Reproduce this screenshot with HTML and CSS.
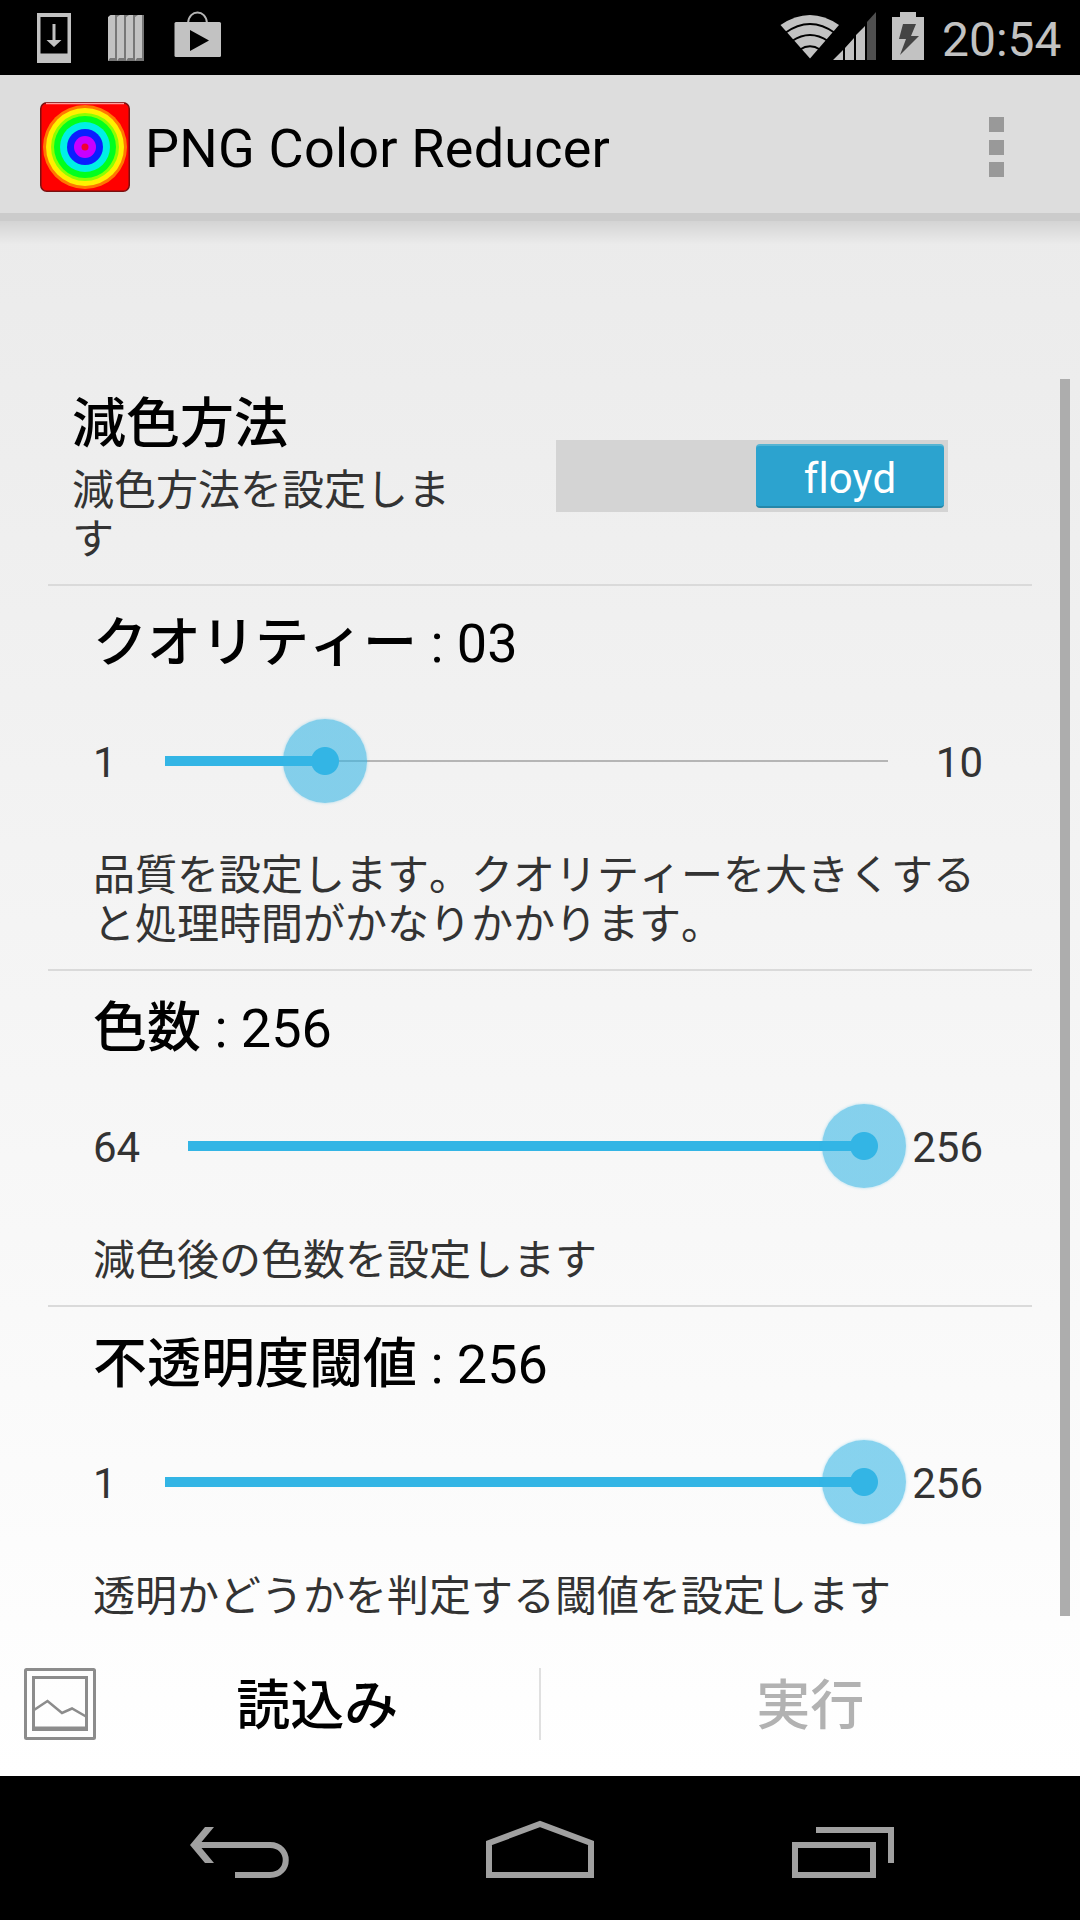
FILE: index.html
```
<!DOCTYPE html>
<html lang="ja">
<head>
  <meta charset="UTF-8" />
  <meta name="viewport" content="width=device-width, initial-scale=1.0"/>
  <title>PNG Color Reducer</title>
  <link rel="stylesheet" href="styles.css">
</head>
<body>
  <div class="status-bar">
    <svg class="status-left" width="240" height="75" viewBox="0 0 240 75">
      <!-- download -->
      <path fill="#c2c2c2" fill-rule="evenodd" d="M37 13h34v50H37zM40.500 17v36.500h27V17z"/>
      <path fill="#c2c2c2" d="M52.500 24h3v16h6L54 47l-7.500-7h6z"/>
      <!-- books -->
      <path fill="#777" d="M110 15h34v46h-36V18z"/>
      <path fill="#c2c2c2" d="M108 17l3-2h4v43h-5l-2 3zM117 17l3-2h4v43h-5l-2 3zM126 17l3-2h4v43h-5l-2 3zM135 17l3-2h4v43h-5l-2 3z"/>
      <!-- store bag -->
      <path fill="none" stroke="#b5b5b5" stroke-width="2" d="M188 23c1-14 18-14 19 0"/>
      <rect x="174.500" y="22" width="46.500" height="35" rx="1.500" fill="#c2c2c2"/>
      <path d="M190 30l19 10.500L190 51z"/>
    </svg>
    <svg class="status-right" width="150" height="75" viewBox="780 0 150 75">
      <!-- wifi -->
      <path fill="#c2c2c2" d="M780.500 25Q810 5 839 25L810 58.500z"/>
      <g fill="none" stroke="#000" stroke-width="2">
        <path d="M785 33Q810 15 835 33"/>
        <path d="M792 41Q810 29 828 41"/>
        <path d="M800 49.500Q810 43 820 49.500"/>
      </g>
      <!-- signal -->
      <path fill="#c2c2c2" d="M833 60l10-10v10zM845 48l9-10v22h-9zM856 35l9-9v34h-9z"/>
      <path fill="#4f4f4f" d="M867 22l9-10v48h-9z"/>
      <!-- battery -->
      <path fill="#c2c2c2" d="M892 17h8v-5h16v5h8v43h-32z"/>
      <path fill="#444" d="M903 24h13l-5 12h8l-19 19 6-16h-7z"/>
    </svg>
    <span class="clock">20:54</span>
  </div>

  <div class="app">
    <header class="action-bar">
      <svg class="app-icon" width="90" height="90" viewBox="0 0 90 90">
        <rect x=".75" y=".75" width="88.500" height="88.500" rx="6" fill="#f00" stroke="#7a1010" stroke-width="1.500"/>
        <path d="M6 1.500h78" stroke="#ff9c9c" stroke-width="1.500"/>
        <g transform="translate(45 45)">
          <circle r="42" fill="#ff7800"/>
          <circle r="39" fill="#fff000"/>
          <circle r="34" fill="#8cff00"/>
          <circle r="31" fill="#00ff1e"/>
          <circle r="25" fill="#00f0e6"/>
          <circle r="18" fill="#0a1eff"/>
          <circle r="11" fill="#c800ff"/>
          <circle r="3.500" fill="#f00032"/>
        </g>
      </svg>
      <h1>PNG Color Reducer</h1>
      <div class="overflow"><i></i><i></i><i></i></div>
    </header>

    <main class="settings">
      <section class="item item-switch">
        <div class="item-text">
          <h2>減色方法</h2>
          <p>減色方法を設定します</p>
        </div>
        <div class="switch"><span class="switch-thumb">floyd</span></div>
      </section>

      <section class="item">
        <h2>クオリティー<span> : 03</span></h2>
        <div class="slider">
          <span>1</span>
          <div class="track"><div class="progress" style="width: 22.2%"></div></div>
          <span>10</span>
        </div>
        <p>品質を設定します。クオリティーを大きくすると処理時間がかなりかかります。</p>
      </section>

      <section class="item">
        <h2>色数<span> : 256</span></h2>
        <div class="slider">
          <span>64</span>
          <div class="track"><div class="progress" style="width: 100%"></div></div>
          <span>256</span>
        </div>
        <p>減色後の色数を設定します</p>
      </section>

      <section class="item">
        <h2>不透明度閾値<span> : 256</span></h2>
        <div class="slider">
          <span>1</span>
          <div class="track"><div class="progress" style="width: 100%"></div></div>
          <span>256</span>
        </div>
        <p>透明かどうかを判定する閾値を設定します</p>
      </section>
      <div class="scrollbar"></div>
    </main>

    <footer class="buttons">
      <button class="load">
        <svg width="72" height="72" viewBox="0 0 72 72" fill="none" stroke="#8c8c8c">
          <rect x="1.500" y="1.500" width="69" height="69" rx="1" stroke-width="3"/>
          <rect x="9.500" y="9.500" width="53" height="52" stroke-width="3"/>
          <path d="M9 60.500h54" stroke-width="4"/>
          <path d="M10 42l13.500-9 14.500 12 10-4.500 14 8" stroke-width="2.500"/>
        </svg>
        <span>読込み</span>
      </button>
      <button class="run" disabled>実行</button>
    </footer>
  </div>

  <nav class="nav-bar">
    <svg width="1080" height="144" viewBox="0 1776 1080 144" fill="none" stroke="#a0a0a0" stroke-width="6">
      <path d="M195 1845h75c21 0 21 30 0 30h-35"/>
      <path fill="#a0a0a0" stroke="none" d="M190 1845l15-18h9l-15 18 15 18h-9z"/>
      <path d="M489 1875v-32l51-19 51 19v32z"/>
      <path d="M795 1845h78v30h-78zM816 1830h75v33"/>
    </svg>
  </nav>
</body>
</html>
```

FILE: styles.css
```
* {
  box-sizing: border-box;
}
body {
  font-family: Roboto, "Noto Sans CJK JP", sans-serif;
  font-kerning: none;
  font-variant-ligatures: none;
  margin: 0;
  width: 1080px;
  height: 1920px;
  background: #000;
  color: #000;
  overflow: hidden;
}
h1, h2, p {
  margin: 0;
  font-weight: 400;
}
svg {
  display: block;
}

/* status bar */
.status-bar {
  display: flex;
  height: 75px;
}
.status-right {
  margin-left: auto;
}
.clock {
  width: 150px;
  padding-left: 12px;
  color: #c2c2c2;
  font-size: 48px;
  line-height: 79px;
}

.app {
  display: flex;
  flex-direction: column;
  height: 1701px;
  background: linear-gradient(#e9e9e9, #fff);
}

/* action bar */
.action-bar {
  display: flex;
  align-items: center;
  flex: none;
  height: 146px;
  padding: 0 76px 0 40px;
  background: #ddd;
  border-bottom: 8px solid #cbcbcb;
}
.app-icon {
  margin-top: 6px;
}
h1 {
  margin-left: 15px;
  padding-top: 9px;
  font-size: 54px;
  line-height: 64px;
  letter-spacing: 0.2px;
}
.overflow {
  display: flex;
  flex-direction: column;
  gap: 7.5px;
  margin-left: auto;
  padding-top: 6px;
}
.overflow i {
  width: 15px;
  height: 15px;
  background: #999;
}

/* settings list */
.settings {
  position: relative;
  flex: 1;
  padding: 158px 48px 0;
  background: linear-gradient(rgba(0,0,0,0.1), transparent 24px);
}
.item {
  padding: 26px 49px 20px 45px;
  border-bottom: 2px solid #dadada;
}
.item:nth-of-type(4) {
  padding-bottom: 0;
  border-bottom: 0;
}
.item h2 {
  font-size: 54px;
  font-weight: 500;
  line-height: 64px;
}
.item h2 span {
  font-weight: 400;
}
.item p {
  color: #333;
  font-size: 42px;
  line-height: 49px;
}
.item-switch {
  display: flex;
  justify-content: space-between;
  align-items: center;
  padding: 14px 84px 20px 24px;
}
.item-text {
  width: 390px;
}
.item-text p {
  margin-top: 9px;
}
.switch {
  display: flex;
  justify-content: flex-end;
  width: 392px;
  height: 72px;
  margin-bottom: 5px;
  padding: 4px;
  background: #d4d4d4;
}
.switch-thumb {
  width: 188px;
  height: 64px;
  border-top: 2px solid #55b4d3;
  border-bottom: 2px solid #2587a9;
  border-radius: 4px;
  background: #2ca3cf;
  color: #fff;
  font-size: 42px;
  line-height: 65px;
  text-align: center;
}

/* sliders */
.slider {
  display: flex;
  align-items: center;
  gap: 48px;
  height: 84px;
  margin: 43px 0 48px;
}
.slider span {
  padding-top: 3px;
  color: #333;
  font-size: 42px;
  line-height: 49px;
}
.track {
  display: flex;
  align-items: center;
  flex: 1;
  height: 10px;
  background: linear-gradient(#b5b5b5, #b5b5b5) center / 100% 2px no-repeat;
}
.progress {
  position: relative;
  height: 10px;
  background: #33b5e5;
}
.progress::after {
  content: "";
  position: absolute;
  top: -37px;
  right: -42px;
  width: 84px;
  height: 84px;
  border-radius: 50%;
  background: radial-gradient(circle, #33b5e5 13.5px, rgba(51,181,229,0.58) 14.5px);
  box-shadow: 0 0 3px rgba(51,181,229,0.4);
}
.scrollbar {
  position: absolute;
  top: 158px;
  right: 10px;
  width: 10px;
  height: 1237px;
  background: #adadad;
}

/* bottom buttons */
.buttons {
  display: flex;
  flex: none;
  align-items: center;
  height: 144px;
}
button {
  width: 540px;
  height: 72px;
  padding: 0;
  border: 0;
  background: none;
  color: #000;
  font: 500 54px/72px Roboto, "Noto Sans CJK JP", sans-serif;
}
.load {
  display: flex;
  width: 541px;
  padding-left: 24px;
  border-right: 2px solid #e0e0e0;
}
.load span {
  flex: 1;
  padding-top: 3px;
}
.run {
  padding-top: 3px;
}
.run:disabled {
  color: #b2b2b2;
}

.nav-bar {
  height: 144px;
}
```
